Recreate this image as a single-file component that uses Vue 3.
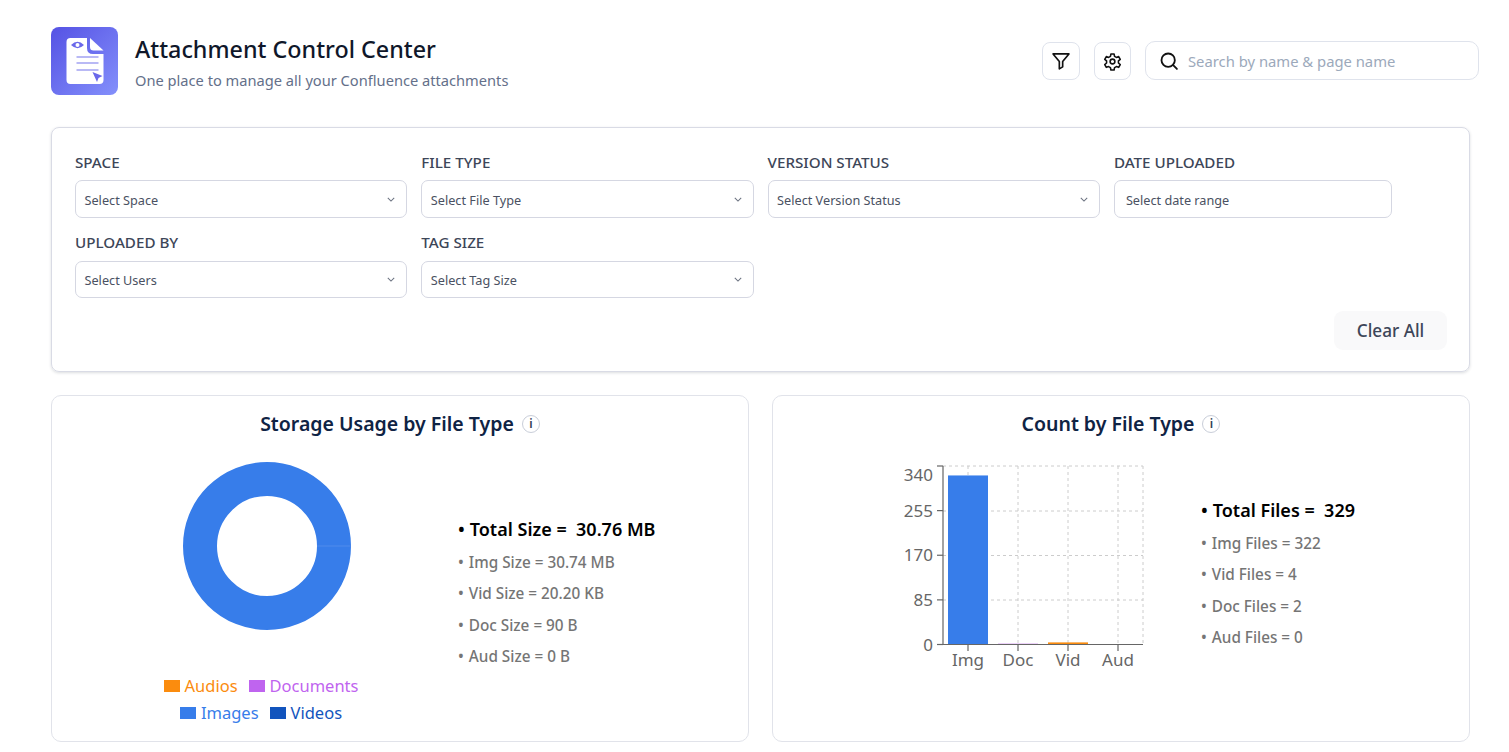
<script setup>
const topFilters = [
  { label: "SPACE", placeholder: "Select Space" },
  { label: "FILE TYPE", placeholder: "Select File Type" },
  { label: "VERSION STATUS", placeholder: "Select Version Status" },
];
const bottomFilters = [
  { label: "UPLOADED BY", placeholder: "Select Users" },
  { label: "TAG SIZE", placeholder: "Select Tag Size" },
];

const sizeStats = ["Img Size = 30.74 MB", "Vid Size = 20.20 KB", "Doc Size = 90 B", "Aud Size = 0 B"];
const countStats = ["Img Files = 322", "Vid Files = 4", "Doc Files = 2", "Aud Files = 0"];

const legendTop = [
  { name: "Audios", color: "#fb8c0e" },
  { name: "Documents", color: "#bf64ef" },
];
const legendBottom = [
  { name: "Images", color: "#377dea" },
  { name: "Videos", color: "#1254bd" },
];

// bar chart scale
const chartTop = 15;
const chartBottom = 193.5;
const yFor = (v) => chartBottom - ((chartBottom - chartTop) * v) / 340;
const yTicks = [0, 85, 170, 255, 340];
// the top label sits below its tick so it stays inside the chart box
const labelY = (t) => yFor(t) + (t === 340 ? 15 : 6);
const bars = [
  { name: "Img", value: 322, x: 47, cx: 67, color: "#377dea" },
  { name: "Doc", value: 2, x: 97, cx: 117, color: "#dcaef5" },
  { name: "Vid", value: 4, x: 147, cx: 167, color: "#fb8c0e" },
  { name: "Aud", value: 0, x: 197, cx: 217, color: "#1254bd" },
];
</script>

<template>
  <div class="page">
    <header class="header">
      <div class="brand">
        <div class="logo">
          <svg width="46" height="52" viewBox="0 0 46 52">
            <path d="M8.500 3H25V13Q25 19 31 19H41.500V45Q41.500 49 37.500 49H8.500Q4.500 49 4.500 45V7Q4.500 3 8.500 3Z" fill="#fff" />
            <path d="M28 3L41.500 15.500H31.500Q28 15.500 28 12Z" fill="#fff" />
            <path d="M9 10Q15.500 3.500 22 10Q15.500 16.500 9 10Z" fill="#6a68ea" />
            <circle cx="15.500" cy="10" r="2" fill="#fff" />
            <path d="M14.500 22H36.500M14.500 28H36.500M14.500 35H36.500" stroke="#a3a2f2" stroke-width="1.500" />
            <path d="M30.500 37L40.500 41L36.500 43L35 47Z" fill="#6a68ea" />
          </svg>
        </div>
        <div class="brand-text">
          <h1 class="title">Attachment Control Center</h1>
          <p class="subtitle">One place to manage all your Confluence attachments</p>
        </div>
      </div>

      <div class="actions">
        <button class="icon-btn">
          <svg width="20" height="20" viewBox="0 0 24 24" fill="none" stroke="#111" stroke-width="2" stroke-linejoin="round" stroke-linecap="round">
            <path d="M2.500 3.500h19l-7.500 9.200v6.300l-4 2.500v-8.800z" />
          </svg>
        </button>
        <button class="icon-btn">
          <svg width="19" height="19" viewBox="0 0 24 24" fill="none" stroke="#111" stroke-width="2" stroke-linejoin="round">
            <circle cx="12" cy="12" r="3" />
            <path d="M10 2.500h4l.6 3 2.300 1.300 2.900-1 2 3.500-2.300 2 0 2.600 2.300 2-2 3.500-2.900-1-2.300 1.300-.6 3h-4l-.6-3-2.300-1.300-2.900 1-2-3.500 2.300-2 0-2.600-2.300-2 2-3.500 2.900 1 2.300-1.300z" />
          </svg>
        </button>
        <div class="search">
          <svg width="20" height="20" viewBox="0 0 24 24" fill="none" stroke="#111" stroke-width="2.200" stroke-linecap="round">
            <circle cx="11" cy="11" r="8" />
            <path d="M17 17l4.500 4.500" />
          </svg>
          <span>Search by name &amp; page name</span>
        </div>
      </div>
    </header>

    <section class="filters">
      <div class="filter-row first">
        <div v-for="f in topFilters" :key="f.label" class="field">
          <label>{{ f.label }}</label>
          <div class="select">
            <span>{{ f.placeholder }}</span>
            <svg width="8" height="5" viewBox="0 0 10 6" fill="none" stroke="#6b7280" stroke-width="1.300"><path d="M1 1l4 4 4-4" /></svg>
          </div>
        </div>
        <div class="field date">
          <label>DATE UPLOADED</label>
          <div class="select date-input"><span>Select date range</span></div>
        </div>
      </div>
      <div class="filter-row second">
        <div v-for="f in bottomFilters" :key="f.label" class="field">
          <label>{{ f.label }}</label>
          <div class="select">
            <span>{{ f.placeholder }}</span>
            <svg width="8" height="5" viewBox="0 0 10 6" fill="none" stroke="#6b7280" stroke-width="1.300"><path d="M1 1l4 4 4-4" /></svg>
          </div>
        </div>
      </div>
      <div class="filter-foot">
        <button class="clear">Clear All</button>
      </div>
    </section>

    <div class="cards">
      <section class="card">
        <h2 class="card-title">
          Storage Usage by File Type
          <span class="info">i</span>
        </h2>
        <div class="card-body">
          <div class="donut-col">
            <svg class="donut" width="170" height="170" viewBox="0 0 170 170">
              <circle cx="85" cy="85" r="67" fill="none" stroke="#377dea" stroke-width="34" />
              <path d="M135 85H169" stroke="#5b93ee" stroke-width="0.700" />
            </svg>
            <div class="legend">
              <div class="legend-row">
                <span v-for="l in legendTop" :key="l.name" class="legend-item" :style="{ color: l.color }">
                  <i :style="{ background: l.color }"></i>{{ l.name }}
                </span>
              </div>
              <div class="legend-row">
                <span v-for="l in legendBottom" :key="l.name" class="legend-item" :style="{ color: l.color }">
                  <i :style="{ background: l.color }"></i>{{ l.name }}
                </span>
              </div>
            </div>
          </div>
          <ul class="stats size-stats">
            <li class="total">Total Size =&nbsp; 30.76 MB</li>
            <li v-for="s in sizeStats" :key="s">{{ s }}</li>
          </ul>
        </div>
      </section>

      <section class="card">
        <h2 class="card-title">
          Count by File Type
          <span class="info">i</span>
        </h2>
        <div class="card-body count-body">
          <svg class="bars" width="250" height="225" viewBox="0 0 250 225">
            <g stroke="#ccc" stroke-dasharray="3 3" fill="none">
              <path d="M42 15H242M42 60H242M42 104.500H242M42 149H242" />
              <path d="M67 15V193M117 15V193M167 15V193M217 15V193M242 15V193" />
            </g>
            <rect v-for="b in bars" :key="b.name" :x="b.x" :y="yFor(b.value)" width="40" :height="chartBottom - yFor(b.value)" :fill="b.color" />
            <path d="M42 15V193.500H242" fill="none" stroke="#666" stroke-width="1.200" />
            <g stroke="#666" stroke-width="1.200">
              <line v-for="t in yTicks" :key="t" x1="36" x2="42" :y1="yFor(t)" :y2="yFor(t)" />
              <line v-for="b in bars" :key="b.name" :x1="b.cx" :x2="b.cx" y1="193.500" y2="200" />
            </g>
            <g class="axis-text">
              <text v-for="t in yTicks" :key="t" x="32" :y="labelY(t)" text-anchor="end">{{ t }}</text>
              <text v-for="b in bars" :key="b.name" :x="b.cx" y="215" text-anchor="middle">{{ b.name }}</text>
            </g>
          </svg>
          <ul class="stats count-stats">
            <li class="total">Total Files =&nbsp; 329</li>
            <li v-for="s in countStats" :key="s">{{ s }}</li>
          </ul>
        </div>
      </section>
    </div>
  </div>
</template>

<style>
html,
body {
  background: #fff;
}
</style>

<style scoped>
* {
  box-sizing: border-box;
}

.page {
  padding: 27px 39px 0 51px;
  font-family: "Noto Sans", "Open Sans", sans-serif;
  height: 752px;
  overflow: hidden;
}

.header {
  display: flex;
  justify-content: space-between;
  align-items: flex-start;
  height: 100px;
}

.brand {
  display: flex;
  gap: 17px;
  align-items: flex-start;
}

.brand-text {
  margin-top: 6px;
}

.logo {
  width: 67px;
  height: 68px;
  border-radius: 8px;
  background: linear-gradient(135deg, #5552e4, #8490fb);
  display: flex;
  align-items: center;
  justify-content: center;
}

.title {
  margin: 0;
  font-size: 23.300px;
  line-height: 32px;
  font-weight: 500;
  color: #0f172a;
}

.subtitle {
  margin: 5px 0 0;
  font-size: 14.650px;
  line-height: 20px;
  color: #64708a;
}

.actions {
  display: flex;
  gap: 14px;
  margin-top: 14px;
  margin-right: -9px;
}

.icon-btn {
  width: 37.500px;
  height: 38px;
  margin-top: 1px;
  padding: 0;
  border: 1px solid #dfe3ec;
  border-radius: 8px;
  background: #fff;
  display: flex;
  align-items: center;
  justify-content: center;
}

.search {
  width: 334px;
  height: 39px;
  border: 1px solid #dfe3ec;
  border-radius: 10px;
  padding: 0 14px 0 13px;
  display: flex;
  align-items: center;
  gap: 9px;
  font-size: 14.800px;
  color: #9ca9bb;
}

.filters {
  height: 245px;
  border: 1px solid #d9dbe5;
  border-radius: 8px;
  box-shadow: 0 1px 3px rgba(30, 41, 59, 0.16);
  padding: 24px 23px 0;
}

.filter-row {
  display: grid;
  grid-template-columns: 332.300px 332.300px 332.300px 278.500px;
  column-gap: 14px;
}

.filter-row.second {
  margin-top: 14px;
}

.field label {
  display: block;
  font-size: 15.200px;
  line-height: 20px;
  font-weight: 500;
  color: #3d4658;
  margin-bottom: 8px;
}

.second .field label {
  margin-bottom: 9px;
}

.select {
  height: 38px;
  border: 1px solid #d5d7e2;
  border-radius: 7px;
  padding: 0 11px 0 8.500px;
  display: flex;
  align-items: center;
  justify-content: space-between;
  font-size: 12.700px;
  color: #4a5162;
}

.first .select {
  padding-top: 1px;
}

.second .select {
  height: 37px;
}

.date-input {
  padding-left: 11px;
}

.filter-foot {
  display: flex;
  justify-content: flex-end;
  margin-top: 13px;
  margin-right: -1px;
}

.clear {
  width: 113px;
  height: 39px;
  border: none;
  border-radius: 9px;
  background: #f9f9fa;
  font-family: inherit;
  font-size: 17.200px;
  font-weight: 500;
  color: #3d4658;
}

.cards {
  display: grid;
  grid-template-columns: 698px 698px;
  column-gap: 23px;
  margin-top: 23px;
}

.card {
  height: 347px;
  border: 1px solid #e1e3ea;
  border-radius: 10px;
  padding-top: 15px;
}

.card-title {
  margin: 0;
  display: flex;
  align-items: center;
  justify-content: center;
  gap: 8px;
  font-size: 19.500px;
  line-height: 26px;
  font-weight: 600;
  color: #0f2344;
}

.info {
  width: 18px;
  height: 18px;
  border: 1px solid #c9ced9;
  border-radius: 50%;
  display: inline-flex;
  align-items: center;
  justify-content: center;
  font-size: 12px;
  font-weight: 600;
  color: #334155;
}

.card-body {
  display: flex;
  align-items: flex-start;
  padding-left: 19px;
}

.donut-col {
  width: 380px;
  display: flex;
  flex-direction: column;
  align-items: center;
  padding-top: 24px;
}

.donut {
  display: block;
  margin-left: 12px;
}

.legend {
  margin-top: 41px;
}

.legend-row {
  display: flex;
  justify-content: center;
  gap: 11px;
  height: 27px;
  align-items: center;
}

.legend-item {
  display: flex;
  align-items: center;
  font-size: 16.500px;
  line-height: 22px;
}

.legend-item i {
  display: block;
  width: 16px;
  height: 12px;
  margin-right: 5px;
}

.stats {
  list-style: none;
  margin: 0;
  padding: 0;
  font-size: 15.300px;
  font-weight: 500;
  color: #757575;
}

.stats li {
  line-height: 20px;
  margin-bottom: 11.300px;
}

.stats li::before {
  content: "•";
  margin-right: 5px;
}

.stats .total {
  font-size: 18px;
  font-weight: 600;
  color: #000;
  line-height: 26px;
  margin-bottom: 10px;
}

.size-stats {
  margin: 79px 0 0 7px;
}

.count-body {
  padding-left: 128px;
}

.bars {
  display: block;
  margin-top: 14px;
}

.count-stats {
  margin: 60px 0 0 50px;
}

.axis-text text {
  font-size: 17px;
  fill: #666;
}
</style>
